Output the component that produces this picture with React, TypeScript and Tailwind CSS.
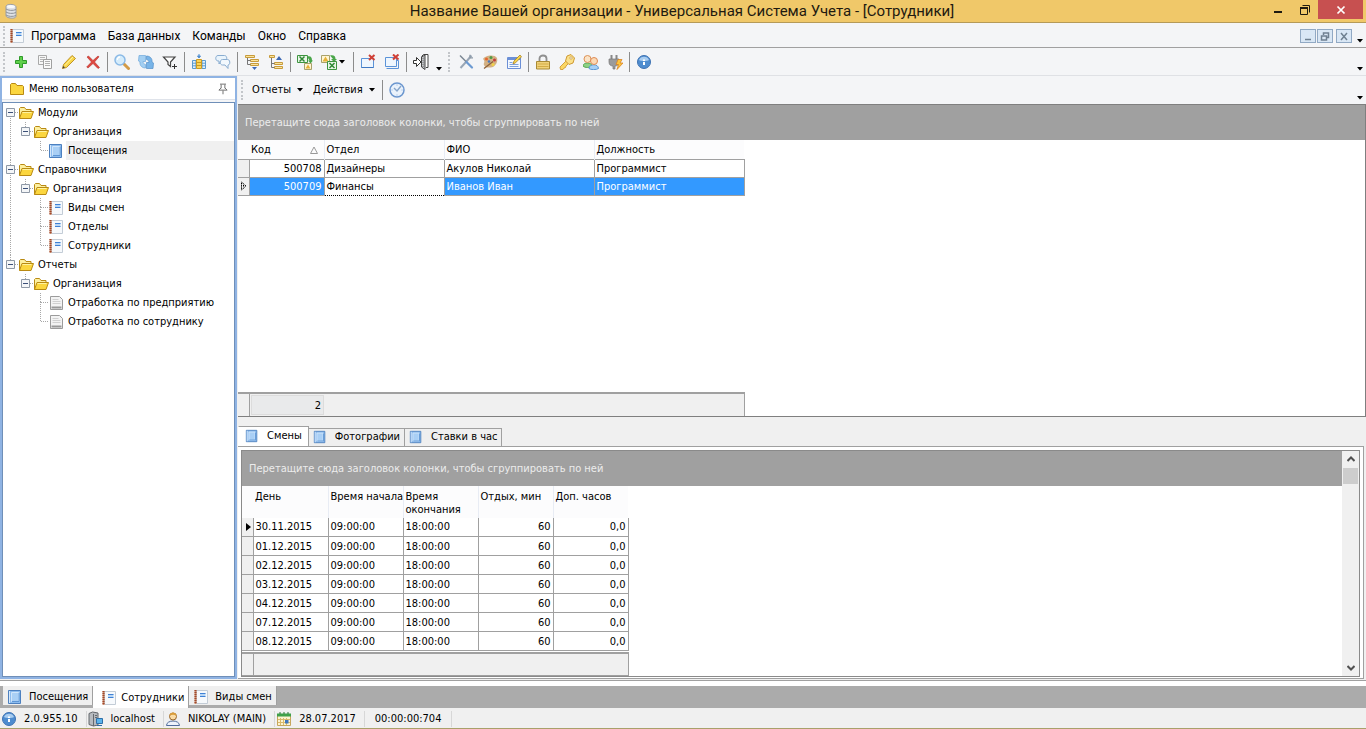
import React, { useState } from 'react';
import clsx from 'clsx';

type IconName =
  | 'database' | 'notebook' | 'add' | 'copy' | 'pencil' | 'remove' | 'search' | 'refresh' | 'filter'
  | 'columns' | 'chat' | 'expand' | 'collapse' | 'excel' | 'excelImport' | 'closeWindow' | 'closeAll'
  | 'exit' | 'tools' | 'palette' | 'form' | 'lock' | 'key' | 'users' | 'plug' | 'info' | 'clock'
  | 'folder' | 'folderOpen' | 'book' | 'report' | 'pin' | 'server' | 'user' | 'calendar';

const icons: Record<IconName, React.ReactNode> = {
  database: (
    <>
      <path d="M3 3.500c0-1.500 3-2.500 6-2s4 1.500 4 2.500v9c0 2-3 2.500-6 2s-4-1.500-4-2.500z" fill="#dfe2e6" stroke="#9a9da3" />
      <path d="M3 6c2 1.500 7 2 10 .5M3 9c2 1.500 7 2 10 .5M3 12c2 1.500 7 2 10 .5" fill="none" stroke="#8d9299" />
      <ellipse cx="8" cy="3.500" rx="4" ry="1.500" fill="#f8f9fa" />
    </>
  ),
  notebook: (
    <>
      <path d="M3.500 1.500h11v13h-11z" fill="#f6f9fc" stroke="#c3ccd6" />
      <path d="M2.500 1v14" stroke="#c98a6c" strokeWidth="2" />
      <path d="M2.500 1v14" stroke="#a0492d" strokeWidth="2" strokeDasharray="1 1" />
      <path d="M7 4h5.500v3.500H7z" fill="#b9d6f4" />
      <path d="M7 4.500h5.500M7 7.500h5.500" stroke="#3f82d6" />
    </>
  ),
  add: <path d="M6.500 2.500h3v4h4v3h-4v4h-3v-4h-4v-3h4z" fill="#5fd04b" stroke="#2f9a2a" />,
  copy: (
    <>
      <path d="M1.500 1.500h8v9h-8z" fill="#f7f7f7" stroke="#a9a9a9" />
      <path d="M3 3.500h5M3 5.500h5M3 7.500h3" stroke="#b5b5b5" />
      <path d="M6.500 5.500h8v9h-8z" fill="#fafafa" stroke="#a0a0a0" />
      <path d="M8 7.500h5M8 9.500h5M8 11.500h5" stroke="#b0b0b0" />
    </>
  ),
  pencil: (
    <>
      <path d="M1.500 14.500l1-4 8.500-9 3.500 3-9 9z" fill="#f8d648" stroke="#bf942a" />
      <path d="M4 11.500l8-8.500" stroke="#fff3a8" />
      <path d="M1.500 14.500l.7-2.500 1.800 1.500z" fill="#444" />
    </>
  ),
  remove: <path d="M2 3l1.500-1L8 6.500 13 2l1 .8L9.500 8l5 5.500-1.500 1L8 9.500 3 14l-1.300-1L6.500 8z" fill="#e0473f" stroke="#b3302c" strokeWidth=".6" />,
  search: (
    <>
      <path d="M10 10l4.500 4.500" stroke="#d39a45" strokeWidth="3" strokeLinecap="round" />
      <circle cx="6" cy="6" r="5" fill="#d5ecfb" stroke="#8ab9e6" strokeWidth="1.500" />
      <path d="M3.500 6a2.500 2.500 0 012.500-3" fill="none" stroke="#fff" strokeWidth="1.300" />
    </>
  ),
  refresh: (
    <>
      <path d="M1 1.500h6.500v6H5c0 1.500.8 2.500 2.500 3v3.500C4 14 1.500 11.500 2 8L.5 7z" fill="#a3cff2" stroke="#6fa9db" strokeWidth=".7" />
      <path d="M15 14.500H8.500v-6H11c0-1.500-.8-2.500-2.500-3V2c3.500 0 6 2.500 5.500 6l1.500 1z" fill="#78b4e8" stroke="#5590ca" strokeWidth=".7" />
    </>
  ),
  filter: (
    <>
      <path d="M1.500 3h11.500l-4.500 5v4.500l-2.500-2V8z" fill="#fff" stroke="#444" strokeWidth="1.200" />
      <path d="M10 12.500h5M12.500 10v5" stroke="#333" />
    </>
  ),
  columns: (
    <>
      <path d="M1.500 6.500h3.500v8H1.500zM11 6.500h3.500v8H11z" fill="#e4f0fa" stroke="#5b9bd0" />
      <path d="M1.500 9.200h13M1.500 11.800h13" stroke="#5b9bd0" />
      <path d="M5.500 5.500h5v9h-5z" fill="#fbd558" stroke="#c99a25" />
      <path d="M5.500 8.500h5M5.500 11.500h5" stroke="#c99a25" />
      <path d="M8 0v3M6.500 2h3L8 4z" fill="#4f8dd0" stroke="#4f8dd0" />
    </>
  ),
  chat: (
    <>
      <path d="M3 1.500h6.500c3 0 3 5.500 0 5.500H6l-2 3V7H3C0 7 0 1.500 3 1.500z" fill="#eaf4fc" stroke="#89acd0" />
      <path d="M7.500 5.500h5c3 0 3 5.500.5 5.500v3.500L10 11H7.500c-3 0-3-5.500 0-5.500z" fill="#f2f8fd" stroke="#89acd0" />
    </>
  ),
  expand: (
    <>
      <path d="M1.500 1.500h9v2h-9zM6.500 5.500h8v2h-8zM6.500 9.500h8v2h-8z" fill="#fbe49a" stroke="#c79b3c" />
      <path d="M3.500 4v6.500h3M3.500 6.500h3" fill="none" stroke="#777" />
      <path d="M8 13h5l-2.500 3z" fill="#3d69b5" />
    </>
  ),
  collapse: (
    <>
      <path d="M1.500 1.500h5v2h-5zM6.500 8.500h8v2h-8zM6.500 12.500h8v2h-8z" fill="#fbe49a" stroke="#c79b3c" />
      <path d="M3.500 4v9.500h3M3.500 9.500h3" fill="none" stroke="#777" />
      <path d="M8 6h6l-3-4z" fill="#3d69b5" />
    </>
  ),
  excel: (
    <>
      <path d="M.5 1.500h10v7H.5z" fill="#eaf6e8" stroke="#3e9440" />
      <path d="M2.500 2.500l5 5M7.500 2.500l-5 5" stroke="#2f8a35" strokeWidth="1.500" />
      <path d="M10 2.500c4-1 5 1 5 4h1l-2.500 3L11 6.500h1.500" fill="#4aa64a" />
      <path d="M7.500 9.500h7v6h-7z" fill="#fff6d4" stroke="#a9a16b" />
      <path d="M8.500 14.500l2.500-4 2.500 4z" fill="#e6b237" />
    </>
  ),
  excelImport: (
    <>
      <path d="M.5 1.500h8v7h-8z" fill="#fff6d4" stroke="#a9a16b" />
      <path d="M1.500 7.500l3-5 3 5z" fill="#e6b237" />
      <path d="M9 1.500c4-1 5.500 1 5.500 3.500H16l-3 3-3-3h2" fill="#4aa64a" />
      <path d="M6.500 7.500h9v8h-9z" fill="#eaf6e8" stroke="#3e9440" />
      <path d="M8.500 9l5 5M13.500 9l-5 5" stroke="#2f8a35" strokeWidth="1.500" />
    </>
  ),
  closeWindow: (
    <>
      <path d="M1.500 4.500h12v9h-12z" fill="#eef6fe" stroke="#5b93d8" />
      <path d="M1.500 13.500h12" stroke="#3f78c2" />
      <path d="M9 1l5.500 5M14.500 1L9 6" stroke="#cf4037" strokeWidth="2" />
    </>
  ),
  closeAll: (
    <>
      <path d="M4.500 6.500h10v8h-12" fill="none" stroke="#5b93d8" />
      <path d="M1.500 3.500h11v9h-11z" fill="#eef6fe" stroke="#5b93d8" />
      <path d="M9 .5l5.500 5M14.500.5L9 5.500" stroke="#cf4037" strokeWidth="2" />
    </>
  ),
  exit: (
    <>
      <path d="M8.500 2.500l2-2h4.500v13h-2" fill="#fff" stroke="#444" />
      <path d="M8.500 3l3.500-2v14.500L8.500 13z" fill="#c5c8cc" stroke="#444" />
      <path d="M10 4v9M11 3.500v10" stroke="#777" strokeDasharray="1 1" />
      <path d="M.5 6.500h3v-3L8 8l-4.500 4.500v-3h-3z" fill="#fff" stroke="#333" />
    </>
  ),
  tools: (
    <>
      <path d="M13.500 1.500L8 8l-5.500 6" stroke="#9aa7b6" strokeWidth="2" />
      <path d="M2 1.500L8.500 8" stroke="#7d8894" strokeWidth="1.500" />
      <path d="M8.500 8l5.500 5.500" stroke="#6c9ad2" strokeWidth="2.200" strokeLinecap="round" />
      <path d="M12 .8v3h3" fill="none" stroke="#8d9aa8" strokeWidth="1.300" />
    </>
  ),
  palette: (
    <>
      <path d="M1 5c2-4 12-5 14-1 1 4-1 7-4 9-4 1-8 1-9-2-1-2 2-3-1-6z" fill="#d3b083" />
      <circle cx="4.500" cy="5" r="1.500" fill="#e8662f" />
      <circle cx="9" cy="3.500" r="1.500" fill="#4f9a45" />
      <circle cx="12.500" cy="6" r="1.500" fill="#c33c3c" />
      <circle cx="7" cy="7.500" r="1.300" fill="#4b79bd" />
      <path d="M2 14.500l9-7" stroke="#8d6238" strokeWidth="1.300" />
      <circle cx="11" cy="10.500" r="1.500" fill="#f1d248" />
    </>
  ),
  form: (
    <>
      <path d="M1.500 3.500h13v11h-13z" fill="#f3f8ff" stroke="#6b8fd6" />
      <path d="M1.500 5h13" stroke="#6b8fd6" strokeWidth="2" />
      <path d="M3.500 8.500h3M3.500 10.500h9M3.500 12.500h9" stroke="#7fa2dc" />
      <path d="M7 10l1-3 6-6 1.500 1.800-6 6z" fill="#f8d648" stroke="#a8812a" strokeWidth=".8" />
    </>
  ),
  lock: (
    <>
      <path d="M4.500 7.500V4.500c0-4 7-4 7 0v3" fill="none" stroke="#8f8f8f" strokeWidth="1.800" />
      <path d="M1.500 7.500h13v7.500h-13z" fill="#f0d27a" stroke="#a98a35" />
      <path d="M2.500 10h11M2.500 12.500h11" stroke="#d3ab45" />
    </>
  ),
  key: (
    <>
      <path d="M7 7l-6 6 .5 2.500h2.500l1-1.500 1.500-.5.5-1.500 3-3z" fill="#fbd763" stroke="#cf9a34" strokeWidth=".9" />
      <path d="M8 2l4-1.500 3.500 3.500-1.500 5-4 1.500L6.500 7z" fill="#fbe08a" stroke="#cf9a34" />
      <circle cx="12" cy="4" r="1.200" fill="#fff" stroke="#b9842a" strokeWidth=".6" />
    </>
  ),
  users: (
    <>
      <path d="M0 12c0-4 9-4 9 0-2 2-7 2-9 0z" fill="#8ed187" stroke="#56a850" />
      <circle cx="4.500" cy="5" r="3.500" fill="#fbe3c6" stroke="#dc9156" />
      <path d="M6 14.500c0-5 9.500-5 9.500 0-2 1.500-8 1.500-9.500 0z" fill="#a6d0f7" stroke="#5d97d3" />
      <circle cx="11" cy="7" r="3.500" fill="#fcd9b4" stroke="#dd8a55" />
    </>
  ),
  plug: (
    <>
      <path d="M4.500 1v4M9.500 1v4" stroke="#888" strokeWidth="2" />
      <path d="M2 5h10v3c0 3-2 4-4 4v3H6v-3c-2 0-4-1-4-4z" fill="#9b9b9b" stroke="#757575" strokeWidth=".7" />
      <path d="M11 5.500h4L13 9h3l-6 6.500 1.500-5H9z" fill="#fdc53c" stroke="#d98323" strokeWidth=".8" />
    </>
  ),
  info: (
    <>
      <circle cx="8" cy="8" r="6.500" fill="#4e8ccf" stroke="#3f73b3" />
      <path d="M3 6c1-4.500 9-4.500 10 0-2 1.500-8 1.500-10 0z" fill="#a9cdf0" />
      <path d="M7 5.500h2v1.500H7zM7 8h2v3H7z" fill="#fff" />
    </>
  ),
  clock: (
    <>
      <circle cx="8" cy="8" r="7" fill="#eaf2fb" stroke="#6c97cf" strokeWidth="1.500" />
      <path d="M5 6l3 3 4-5" fill="none" stroke="#86a5cb" strokeWidth="1.400" />
      <path d="M8 2.500v1M8 12.500v1M2.500 8h1M12.500 8h1" stroke="#8cb3e2" />
    </>
  ),
  folder: <path d="M1.500 13.500v-10l1-1h4l1.500 2h5.500l1 1v8z" fill="#fbd63f" stroke="#b98a13" />,
  folderOpen: (
    <>
      <path d="M1.500 13.500v-10l1-1h4l1.500 2h5v3" fill="#fdf0a0" stroke="#b98a13" />
      <path d="M1.500 13.500l2.500-7h11.500l-2.500 7z" fill="#fbd63f" stroke="#b98a13" />
      <path d="M4.500 7.500h9" stroke="#fff3a0" />
    </>
  ),
  book: (
    <>
      <path d="M1.500 1.500h12v13h-12z" fill="#8dbcee" stroke="#4d80bf" />
      <path d="M2.500 2v12" stroke="#d5e8fb" />
      <path d="M4.500 3.500h7v9h-7z" fill="#a9cff5" stroke="#d0e5fa" />
      <path d="M5 12.500h7M12 4v8.500" stroke="#5f97d6" />
    </>
  ),
  report: (
    <>
      <path d="M2.500 1.500h9l3 3v10h-12z" fill="#f3f3f3" stroke="#9b9b9b" />
      <path d="M4.500 4.500h6M4.500 6.500h8M4.500 8.500h8" stroke="#d0d0d0" />
      <path d="M3.500 12.500h10" stroke="#999" strokeWidth="2" />
    </>
  ),
  pin: (
    <>
      <path d="M4 1.500h8M5.500 2v5M10.500 2v5M2.500 9.500h11M8 10v5" stroke="#6f6f6f" strokeWidth="1.300" />
      <path d="M5.500 6.500l-3 3M10.500 6.500l3 3" stroke="#6f6f6f" strokeWidth="1.300" />
    </>
  ),
  server: (
    <>
      <path d="M1 2.500L4.500 1 10 2v12l-4.500 1L1 13.500z" fill="#b6babf" stroke="#62666b" />
      <path d="M5.500 3v12M7 4.500h2M7 6.500h2" stroke="#65696e" />
      <path d="M8.500 7.500h6v5h-6zM9 14.500h5" fill="#5ab3ea" stroke="#2e6fa8" />
    </>
  ),
  user: (
    <>
      <path d="M1.500 14.500c0-6 13-6 13 0z" fill="#edf2fa" stroke="#4f6b9b" />
      <circle cx="8" cy="5.500" r="3.500" fill="#fbdca5" stroke="#97662c" />
      <path d="M4.500 4.500c0-4 7-4 7 0-2-1-5-1-7 0z" fill="#d99c3a" />
    </>
  ),
  calendar: (
    <>
      <path d="M1.500 3.500h13v11h-13z" fill="#fcf3cf" stroke="#c6a65b" />
      <path d="M1 2.500h14v3H1z" fill="#3fa049" />
      <path d="M4 1v2M8 1v2M12 1v2" stroke="#2b7734" />
      <path d="M4.500 7v7M7.500 7v7M10.500 7v7M2 8.500h12M2 11.500h12" stroke="#d9b96b" />
      <path d="M9 9h3.500v3.500H9z" fill="#3f76bd" />
    </>
  ),
};

function Icon({ name, className = 'size-4' }: { name: IconName; className?: string }) {
  return (
    <svg viewBox="0 0 16 16" fill="none" aria-hidden="true" className={clsx('shrink-0', className)}>
      {icons[name]}
    </svg>
  );
}

const Caret = () => (
  <svg viewBox="0 0 6 4" aria-hidden="true" className="h-1 w-1.5 shrink-0">
    <path d="M0 0h6L3 3.500z" fill="#000" />
  </svg>
);

const Separator = () => (
  <span className="flex w-[5px] shrink-0 justify-center">
    <span className="h-5 w-px bg-[#8c8c8c]" />
  </span>
);

const Grip = () => <span className="mr-1 ml-[3px] h-5 w-0 shrink-0 border-l-2 border-dotted border-[#c3c6ca]" />;

function Overflow() {
  return (
    <button type="button" aria-label="Настройка панели" className="flex w-3 shrink-0 items-end justify-center self-stretch pb-1">
      <Caret />
    </button>
  );
}

function ToolButton({ icon, label }: { icon: IconName; label: string }) {
  return (
    <button type="button" aria-label={label} className="flex h-6 w-6 shrink-0 items-center justify-center">
      <Icon name={icon} />
    </button>
  );
}

type ToolItem = { icon: IconName; label: string };

const editGroups: ToolItem[][] = [
  [
    { icon: 'add', label: 'Добавить' },
    { icon: 'copy', label: 'Копировать' },
    { icon: 'pencil', label: 'Изменить' },
    { icon: 'remove', label: 'Удалить' },
  ],
  [
    { icon: 'search', label: 'Поиск' },
    { icon: 'refresh', label: 'Обновить' },
    { icon: 'filter', label: 'Фильтр' },
  ],
  [
    { icon: 'columns', label: 'Колонки' },
    { icon: 'chat', label: 'Примечание' },
  ],
  [
    { icon: 'expand', label: 'Развернуть все' },
    { icon: 'collapse', label: 'Свернуть все' },
  ],
];

const serviceGroups: ToolItem[][] = [
  [
    { icon: 'tools', label: 'Настройки' },
    { icon: 'palette', label: 'Интерфейс' },
    { icon: 'form', label: 'Аудит' },
  ],
  [
    { icon: 'lock', label: 'Блокировка' },
    { icon: 'key', label: 'Права доступа' },
    { icon: 'users', label: 'Пользователи' },
    { icon: 'plug', label: 'Подключения' },
  ],
];

function ToolGroup({ items }: { items: ToolItem[] }) {
  return (
    <>
      {items.map((item) => (
        <ToolButton key={item.label} {...item} />
      ))}
    </>
  );
}

type TreeNode = { label: string; level: 0 | 1 | 2; icon: IconName; last?: boolean; trunk?: boolean };

const tree: TreeNode[] = [
  { label: 'Модули', level: 0, icon: 'folderOpen' },
  { label: 'Организация', level: 1, icon: 'folderOpen', last: true, trunk: true },
  { label: 'Посещения', level: 2, icon: 'book', last: true, trunk: true },
  { label: 'Справочники', level: 0, icon: 'folderOpen' },
  { label: 'Организация', level: 1, icon: 'folderOpen', last: true, trunk: true },
  { label: 'Виды смен', level: 2, icon: 'notebook', trunk: true },
  { label: 'Отделы', level: 2, icon: 'notebook', trunk: true },
  { label: 'Сотрудники', level: 2, icon: 'notebook', last: true, trunk: true },
  { label: 'Отчеты', level: 0, icon: 'folderOpen', last: true },
  { label: 'Организация', level: 1, icon: 'folderOpen', last: true },
  { label: 'Отработка по предприятию', level: 2, icon: 'report' },
  { label: 'Отработка по сотруднику', level: 2, icon: 'report', last: true },
];

function Guide({ path, box }: { path?: string; box?: boolean }) {
  return (
    <svg viewBox="0 0 15 19" fill="none" aria-hidden="true" className="h-[19px] w-[15px] shrink-0">
      {path && <path d={path} stroke="#a8a8a8" strokeDasharray="1 1" />}
      {box && (
        <>
          <path d="M3.500 5.500h8v8h-8z" fill="#f4f6f8" stroke="#8e98a6" />
          <path d="M5 9.500h5" stroke="#3b4f78" />
        </>
      )}
    </svg>
  );
}

function TreeRow({ node, first, selected, onSelect }: { node: TreeNode; first: boolean; selected: boolean; onSelect: () => void }) {
  const ownPath = clsx(!first && 'M7.500 0v9', !node.last && 'M7.500 9v10', 'M8 9.500h7');

  return (
    <li className="flex h-[19px] items-center">
      {node.level > 0 && <Guide path={node.trunk ? 'M7.500 0v19' : undefined} />}
      {node.level > 1 && <Guide />}
      <Guide path={ownPath} box={node.level < 2} />
      <button type="button" onClick={onSelect} className="flex h-full flex-1 items-center">
        <Icon name={node.icon} />
        <span className={clsx('ml-0.5 flex h-full flex-1 items-center pl-0.5 whitespace-nowrap', selected && 'bg-[#f0f0f0]')}>
          {node.label}
        </span>
      </button>
    </li>
  );
}

function Sidebar() {
  const [selected, setSelected] = useState(2);

  return (
    <aside className="flex w-[237px] shrink-0 flex-col border-2 border-[#8fb3e3] bg-[#f4f5f7]">
      <div className="mb-0.5 flex h-[22px] items-center border-b border-[#dfe3ea] bg-white pr-1.5 pl-[7px]">
        <Icon name="folder" />
        <h2 className="ml-1">Меню пользователя</h2>
        <button type="button" aria-label="Закрепить" className="ml-auto">
          <Icon name="pin" className="size-3" />
        </button>
      </div>
      <ul className="flex-1 border border-[#6f8fb8] bg-white">
        {tree.map((node, i) => (
          <TreeRow key={i} node={node} first={i === 0} selected={i === selected} onSelect={() => setSelected(i)} />
        ))}
      </ul>
    </aside>
  );
}

const GroupPanel = () => (
  <div className="flex h-[35px] items-center bg-[#a0a0a0] pt-px pl-[7px] text-[#ececec]">
    Перетащите сюда заголовок колонки, чтобы сгруппировать по ней
  </div>
);

const employees = [
  { id: 500708, department: 'Дизайнеры', name: 'Акулов Николай', position: 'Программист' },
  { id: 500709, department: 'Финансы', name: 'Иванов Иван', position: 'Программист' },
];

function EmployeesGrid() {
  const [current, setCurrent] = useState(500709);

  return (
    <section className="flex flex-1 flex-col border-t border-r border-b border-[#7f7f7f] bg-white">
      <GroupPanel />
      <table className="w-[506px] table-fixed border-collapse">
        <colgroup>
          <col className="w-[11px]" />
          <col className="w-[75px]" />
          <col className="w-[120px]" />
          <col className="w-[150px]" />
          <col className="w-[150px]" />
        </colgroup>
        <thead>
          <tr className="h-[19px] bg-[#fcfcfd] text-left">
            <th aria-label="Указатель" />
            <th className="border-r border-[#e8ecf4] px-0.5 pt-0.5 font-normal">
              <span className="flex items-center justify-between pr-1">
                Код
                <svg viewBox="0 0 8 8" fill="none" aria-hidden="true" className="size-2">
                  <path d="M4 1l3.500 6.500h-7z" stroke="#999" />
                </svg>
              </span>
            </th>
            <th className="border-r border-[#e8ecf4] px-0.5 pt-0.5 font-normal">Отдел</th>
            <th className="border-r border-[#e8ecf4] px-0.5 pt-0.5 font-normal">ФИО</th>
            <th className="px-0.5 pt-0.5 font-normal">Должность</th>
          </tr>
        </thead>
        <tbody>
          {employees.map((row) => {
            const active = row.id === current;
            return (
              <tr
                key={row.id}
                onClick={() => setCurrent(row.id)}
                className={clsx('h-[18px]', active && 'bg-[#3399ff] text-white')}
              >
                <td className="border-y border-r border-[#a0a0a0] bg-[#f0f0f0]">
                  {active && (
                    <svg viewBox="0 0 8 10" fill="none" aria-hidden="true" className="ml-0.5 h-2.5 w-2">
                      <path d="M1.500 1L6 5 1.500 9zM3.500 4v2" stroke="#000" strokeDasharray="1.500 .7" />
                    </svg>
                  )}
                </td>
                <td className="border border-[#a0a0a0] px-0.5 pt-px text-right">{row.id}</td>
                <td className={clsx('border border-[#a0a0a0] px-0.5 pt-px', active && 'border-dotted border-black bg-white text-black')}>
                  {row.department}
                </td>
                <td className="border border-[#a0a0a0] px-0.5 pt-px">{row.name}</td>
                <td className="border border-[#a0a0a0] px-0.5 pt-px">{row.position}</td>
              </tr>
            );
          })}
        </tbody>
      </table>
      <div className="mt-auto flex h-6 w-[507px] border-t-2 border-r border-[#a0a0a0] bg-[#f0f0f0]">
        <span className="w-3 border-r border-[#a0a0a0]" />
        <output className="m-px flex w-[73px] items-center justify-end border border-[#dcdcdc] bg-[#e9eaeb] pt-0.5 pr-0.5">
          {employees.length}
        </output>
      </div>
    </section>
  );
}

const shiftDays = ['30.11.2015', '01.12.2015', '02.12.2015', '03.12.2015', '04.12.2015', '07.12.2015', '08.12.2015'];
const shiftColumns = ['День', 'Время начала', 'Время\nокончания', 'Отдых, мин', 'Доп. часов'];

function ShiftsGrid() {
  return (
    <div className="flex flex-1 border border-[#8a8a8a]">
      <div className="min-w-0 flex-1">
        <GroupPanel />
        <table className="w-[386px] table-fixed border-collapse">
          <colgroup>
            <col className="w-[11px]" />
            {shiftColumns.map((title) => (
              <col key={title} className="w-[75px]" />
            ))}
          </colgroup>
          <thead>
            <tr className="h-8 bg-[#fcfcfd] text-left align-top">
              <th aria-label="Указатель" />
              {shiftColumns.map((title) => (
                <th
                  key={title}
                  className="border-r border-[#e8ecf4] pt-1 pl-0.5 leading-[13px] font-normal whitespace-pre last:border-r-0"
                >
                  {title}
                </th>
              ))}
            </tr>
          </thead>
          <tbody>
            {shiftDays.map((day, i) => (
              <tr key={day} className="h-[19px]">
                <td className="border-r border-b border-[#a0a0a0] bg-[#f0f0f0]">
                  {i === 0 && (
                    <svg viewBox="0 0 5 8" aria-hidden="true" className="ml-1 h-2 w-[5px]">
                      <path d="M0 0l5 4-5 4z" fill="#000" />
                    </svg>
                  )}
                </td>
                <td className="border border-t-0 border-[#a0a0a0] px-0.5 pt-px">{day}</td>
                <td className="border border-t-0 border-[#a0a0a0] px-0.5 pt-px">09:00:00</td>
                <td className="border border-t-0 border-[#a0a0a0] px-0.5 pt-px">18:00:00</td>
                <td className="border border-t-0 border-[#a0a0a0] px-0.5 pt-px text-right">60</td>
                <td className="border border-t-0 border-[#a0a0a0] px-0.5 pt-px text-right">0,0</td>
              </tr>
            ))}
          </tbody>
        </table>
        <div className="mt-px flex h-6 w-[387px] border-t-2 border-r border-b border-[#a0a0a0] bg-[#f0f0f0]">
          <span className="w-3 border-r border-[#a0a0a0]" />
        </div>
      </div>
      <div className="flex w-[17px] shrink-0 flex-col bg-[#f0f0f0]">
        <button type="button" aria-label="Вверх" className="flex h-[17px] items-center justify-center">
          <svg viewBox="0 0 8 6" fill="none" aria-hidden="true" className="h-1.5 w-2">
            <path d="M.5 5L4 1.500 7.500 5" stroke="#505050" strokeWidth="2" />
          </svg>
        </button>
        <div className="mx-px h-4 bg-[#cdcdcd]" />
        <button type="button" aria-label="Вниз" className="mt-auto flex h-[17px] items-center justify-center">
          <svg viewBox="0 0 8 6" fill="none" aria-hidden="true" className="h-1.5 w-2">
            <path d="M.5 1L4 4.500 7.500 1" stroke="#505050" strokeWidth="2" />
          </svg>
        </button>
      </div>
    </div>
  );
}

const detailTabs = ['Смены', 'Фотографии', 'Ставки в час'];

function Details() {
  const [tab, setTab] = useState('Смены');

  return (
    <section className="bg-[#f0f0f0] pt-[9px] pr-0.5">
      <div role="tablist" className="flex items-end">
        {detailTabs.map((title) => (
          <button
            key={title}
            type="button"
            role="tab"
            aria-selected={tab === title}
            onClick={() => setTab(title)}
            className={clsx(
              'flex items-center gap-2 border-t border-r border-[#a0a0a0] pr-1',
              tab === title ? 'h-5 border-l border-l-white bg-white pr-1.5 pl-1.5' : 'h-[18px] bg-[#efefef] pl-1'
            )}
          >
            <Icon name="book" className="size-3.5" />
            {title}
          </button>
        ))}
      </div>
      <div className="flex border border-l-0 border-[#a0a0a0] bg-white px-[3px] pt-[3px] pb-px">
        <ShiftsGrid />
      </div>
    </section>
  );
}

function TitleBar() {
  return (
    <header className="flex h-[23px] items-center border-b border-[#b59a58] bg-[#f0c869] text-[#1e1a10]">
      <Icon name="database" className="ml-[3px] size-4" />
      <h1 className="flex-1 pl-20 text-center font-['Roboto','Open_Sans',sans-serif] text-[15px] leading-5 whitespace-nowrap">
        Название Вашей организации - Универсальная Система Учета - [Сотрудники]
      </h1>
      <button type="button" aria-label="Свернуть" className="flex h-full w-[26px] items-center justify-center">
        <svg viewBox="0 0 10 10" aria-hidden="true" className="size-2.5">
          <path d="M1 5h8v2H1z" fill="#1e1a10" />
        </svg>
      </button>
      <button type="button" aria-label="Восстановить" className="flex h-5 w-[27px] items-center justify-center self-start">
        <svg viewBox="0 0 10 10" fill="none" aria-hidden="true" className="size-2.5">
          <path d="M.5 3h7v6.500h-7zM2.500.5h7v7" stroke="#1e1a10" />
          <path d="M0 3h8" stroke="#1e1a10" strokeWidth="2" />
        </svg>
      </button>
      <button type="button" aria-label="Закрыть" className="mr-[3px] flex h-[19px] w-[45px] items-center justify-center self-start bg-[#c75050]">
        <svg viewBox="0 0 10 10" fill="none" aria-hidden="true" className="size-2.5">
          <path d="M1.500 1.500l7 7M8.500 1.500l-7 7" stroke="#fff" strokeWidth="1.700" />
        </svg>
      </button>
    </header>
  );
}

const windowButtons = [
  { label: 'Свернуть окно', path: 'M2 8.500h6' },
  { label: 'Восстановить окно', path: 'M1.500 5h5v4h-5zM3.500 4V2h5v4.500H7' },
  { label: 'Закрыть окно', path: 'M2 2l6 7M8 2L2 9' },
];

function MenuBar() {
  return (
    <nav className="flex h-[25px] items-center border-b border-[#a0a0a0] bg-[#f4f5f7] pt-0.5 font-['Roboto','Open_Sans',sans-serif] text-xs">
      <Grip />
      <Icon name="notebook" />
      {['Программа', 'База данных', 'Команды', 'Окно', 'Справка'].map((item) => (
        <button key={item} type="button" className="px-1.5">
          {item}
        </button>
      ))}
      <div className="mr-0.5 ml-auto flex gap-px">
        {windowButtons.map(({ label, path }) => (
          <button
            key={label}
            type="button"
            aria-label={label}
            className="flex h-3.5 w-4 items-center justify-center border border-[#91a9c4] bg-[#d9e7f5] last:ml-0.5"
          >
            <svg viewBox="0 0 10 11" fill="none" aria-hidden="true" className="h-[11px] w-2.5">
              <path d={path} stroke="#6f8091" strokeWidth="1.500" />
            </svg>
          </button>
        ))}
      </div>
      <Overflow />
    </nav>
  );
}

function ToolBar() {
  return (
    <div className="flex h-7 items-center border-b border-[#dfe1e5] bg-[#f4f5f7]">
      <Grip />
      {editGroups.map((group, i) => (
        <React.Fragment key={i}>
          <ToolGroup items={group} />
          <Separator />
        </React.Fragment>
      ))}
      <ToolButton icon="excel" label="Экспорт" />
      <button type="button" aria-label="Импорт" className="flex h-6 w-[34px] shrink-0 items-center gap-0.5 pl-1">
        <Icon name="excelImport" />
        <Caret />
      </button>
      <Separator />
      <ToolButton icon="closeWindow" label="Закрыть окно" />
      <ToolButton icon="closeAll" label="Закрыть все окна" />
      <Separator />
      <ToolButton icon="exit" label="Выход" />
      <Overflow />
      <Grip />
      {serviceGroups.map((group, i) => (
        <React.Fragment key={i}>
          <ToolGroup items={group} />
          <Separator />
        </React.Fragment>
      ))}
      <ToolButton icon="info" label="О программе" />
      <span className="flex-1" />
      <Overflow />
    </div>
  );
}

const windows: { title: string; icon: IconName }[] = [
  { title: 'Посещения', icon: 'book' },
  { title: 'Сотрудники', icon: 'notebook' },
  { title: 'Виды смен', icon: 'notebook' },
];

function WindowTabs() {
  const [active, setActive] = useState('Сотрудники');

  return (
    <div role="tablist" className="flex h-[22px] items-start bg-[#ababab] pl-[3px]">
      {windows.map(({ title, icon }) => (
        <button
          key={title}
          type="button"
          role="tab"
          aria-selected={active === title}
          onClick={() => setActive(title)}
          className={clsx(
            'flex items-center border-r border-[#a0a0a0] pt-0.5 pr-1 pl-1',
            active === title ? 'h-[22px] gap-1 bg-white pl-2' : 'h-[19px] gap-1.5 bg-[#efefef]'
          )}
        >
          <Icon name={icon} />
          {title}
        </button>
      ))}
    </div>
  );
}

const statusItems: { text: string; icon?: IconName }[] = [
  { text: '2.0.955.10', icon: 'info' },
  { text: 'localhost', icon: 'server' },
  { text: 'NIKOLAY (MAIN)', icon: 'user' },
  { text: '28.07.2017', icon: 'calendar' },
  { text: '00:00:00:704' },
];

function StatusBar() {
  return (
    <footer className="flex h-[21px] items-center border-b border-[#a8a06a] bg-[#f0f0f0] pt-0.5">
      {statusItems.map(({ text, icon }) => (
        <span key={text} className={clsx('flex h-4 items-center gap-[7px] border-r border-[#d7d7d7]', icon ? 'pr-2 pl-px' : 'px-2.5')}>
          {icon && <Icon name={icon} />}
          {text}
        </span>
      ))}
    </footer>
  );
}

export default function App() {
  return (
    <div className="flex min-h-screen flex-col bg-[#f0f0f0] font-['DejaVu_Sans_Condensed','Noto_Sans',sans-serif] text-[11px] leading-4 text-black">
      <TitleBar />
      <MenuBar />
      <ToolBar />
      <div className="flex flex-1">
        <Sidebar />
        <main className="flex min-w-0 flex-1 flex-col pl-px">
          <div className="flex h-7 items-center bg-[#f4f5f7]">
            <Grip />
            <button type="button" className="flex items-center gap-1.5 px-[5px]">
              Отчеты
              <Caret />
            </button>
            <button type="button" className="flex items-center gap-1.5 px-[5px]">
              Действия
              <Caret />
            </button>
            <Separator />
            <ToolButton icon="clock" label="Время" />
            <span className="flex-1" />
            <Overflow />
          </div>
          <EmployeesGrid />
          <Details />
        </main>
      </div>
      <div className="mt-px h-1.5 border-t border-[#a0a0a0] bg-white" />
      <WindowTabs />
      <StatusBar />
    </div>
  );
}
